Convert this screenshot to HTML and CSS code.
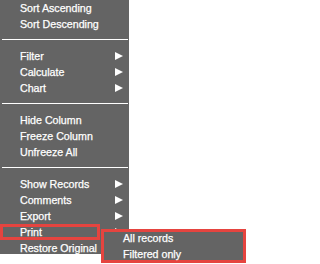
FILE: index.html
```html
<!DOCTYPE html>
<html>
<head>
<meta charset="utf-8">
<link rel="stylesheet" href="styles.css">
</head>
<body>
<div class="menu">
  <ul class="group">
    <li class="item">Sort Ascending</li>
    <li class="item">Sort Descending</li>
  </ul>
  <div class="sep"></div>
  <ul class="group">
    <li class="item has-sub">Filter</li>
    <li class="item has-sub">Calculate</li>
    <li class="item has-sub">Chart</li>
  </ul>
  <div class="sep"></div>
  <ul class="group">
    <li class="item">Hide Column</li>
    <li class="item">Freeze Column</li>
    <li class="item">Unfreeze All</li>
  </ul>
  <div class="sep"></div>
  <ul class="group">
    <li class="item has-sub">Show Records</li>
    <li class="item has-sub">Comments</li>
    <li class="item has-sub">Export</li>
    <li class="item has-sub print">Print
      <span class="highlight"></span>
      <div class="submenu">
        <div class="sub-item">All records</div>
        <div class="sub-item">Filtered only</div>
      </div>
    </li>
    <li class="item">Restore Original</li>
  </ul>
</div>
</body>
</html>
```
FILE: styles.css
```css
html, body {
  margin: 0;
  padding: 0;
  background: #ffffff;
}
html {
  height: 100%;
}
body {
  min-height: 264px;
  font-family: "Liberation Sans", Arial, sans-serif;
  font-size: 10.67px;
  color: #ffffff;
}
.menu {
  width: 129px;
  height: 254px;
  background: #646464;
  position: relative;
}
.group {
  list-style: none;
  margin: 0;
  padding: 0;
}
.item {
  position: relative;
  height: 16px;
  line-height: 16px;
  padding-left: 20px;
  white-space: nowrap;
  -webkit-text-stroke: 0.25px #ffffff;
}
.has-sub::after {
  content: "";
  position: absolute;
  left: 115px;
  top: 4px;
  width: 0;
  height: 0;
  border-left: 8px solid #ffffff;
  border-top: 4px solid transparent;
  border-bottom: 4px solid transparent;
}
.sep {
  height: 1px;
  margin: 7px 1px 8px 2px;
  background: #ffffff;
}
.highlight {
  position: absolute;
  left: 0;
  top: 0;
  width: 100px;
  height: 16px;
  box-sizing: border-box;
  border: 3px solid #e5443f;
}
.submenu {
  position: absolute;
  z-index: 2;
  left: 101px;
  top: 5px;
  width: 145px;
  height: 34px;
  box-sizing: border-box;
  border: 3px solid #e5443f;
  background: #646464;
  padding-left: 19px;
  -webkit-text-stroke: 0.25px #ffffff;
}
.sub-item {
  height: 16px;
  line-height: 16px;
  white-space: nowrap;
}
.sub-item:first-child {
  margin-top: -2px;
}
```
